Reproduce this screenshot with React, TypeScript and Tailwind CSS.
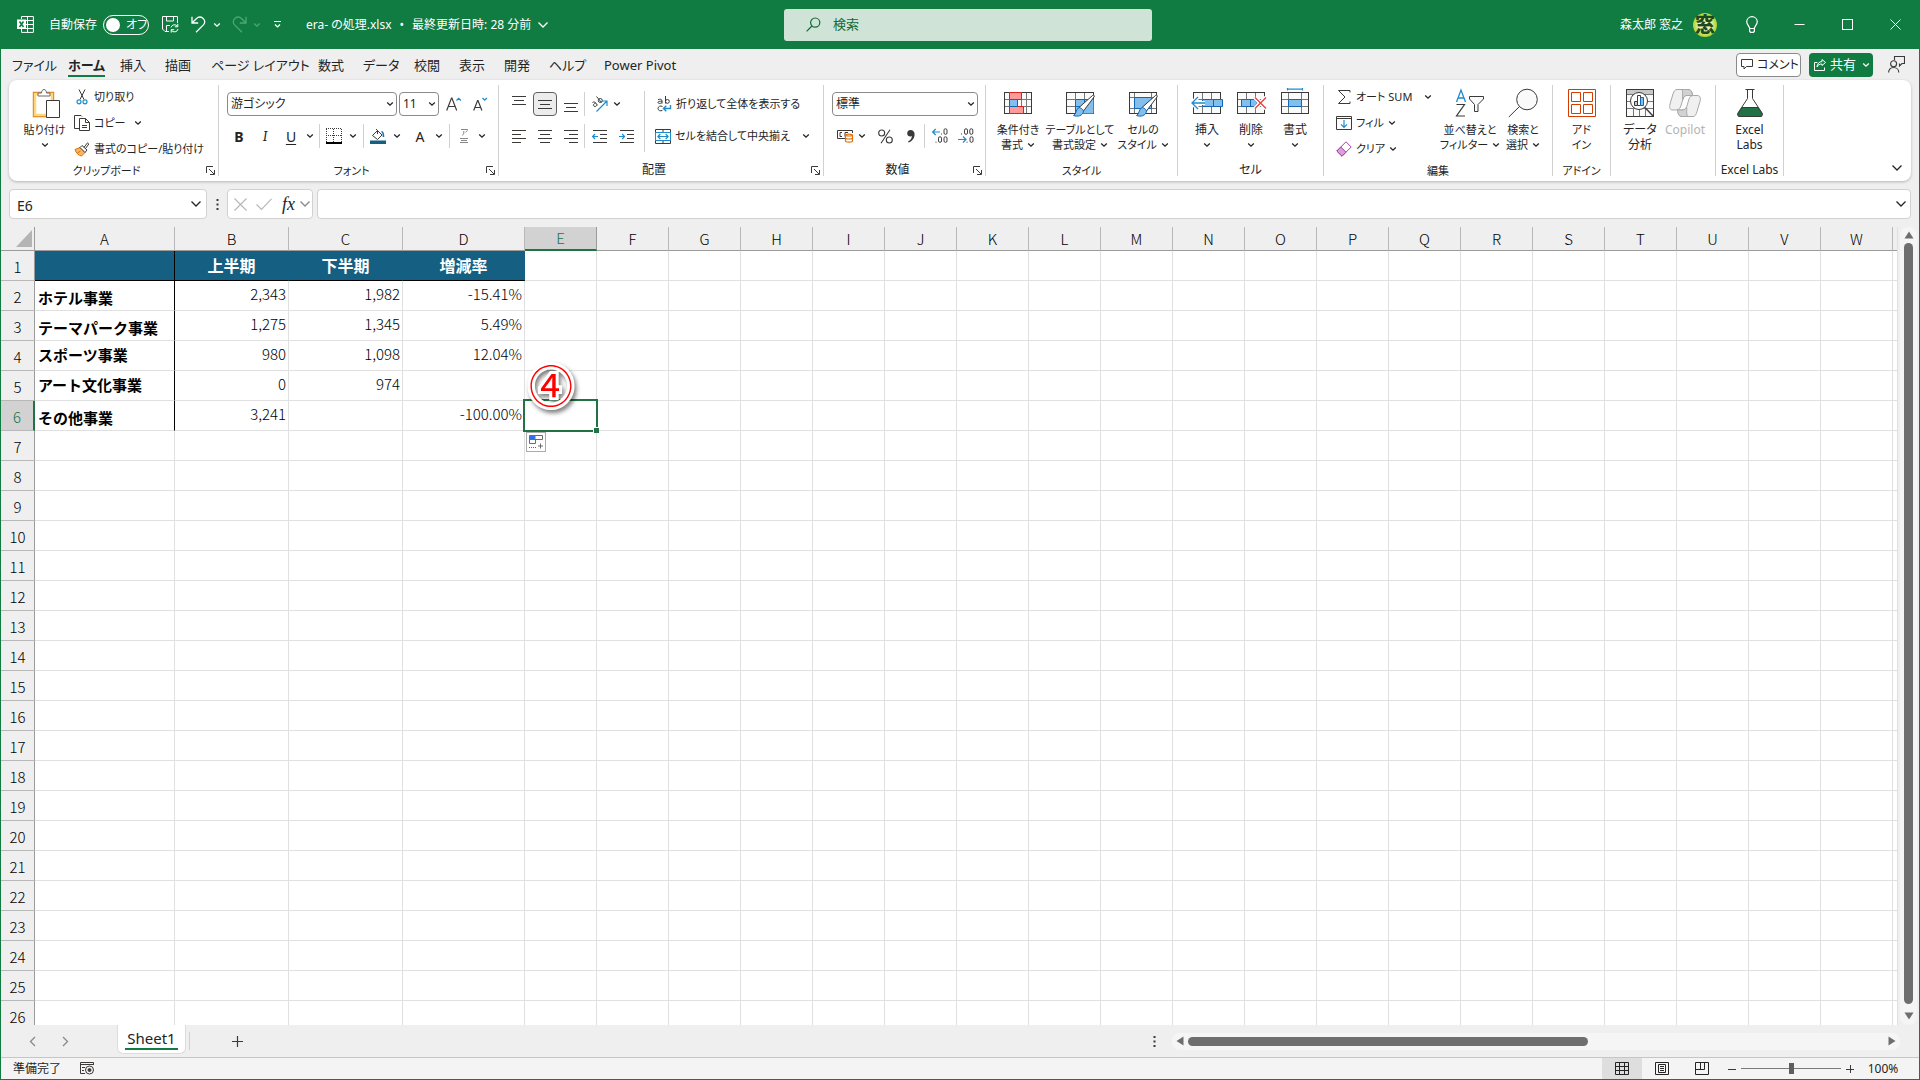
import React from "react";

const INK = "#3b3a39";
const BLUE = "#1e8bcd";

type IconProps = { className?: string };

function Chevron({ className = "" }: IconProps) {
  return (
    <svg width="8" height="6" viewBox="0 0 8 6" fill="none" stroke="currentColor" strokeWidth="1.3" className={`shrink-0 ${className}`}>
      <path d="M1.2 1.5 4 4.2 6.8 1.5" />
    </svg>
  );
}

function WideChevron({ className = "" }: IconProps) {
  return (
    <svg width="12" height="8" viewBox="0 0 12 8" fill="none" stroke="currentColor" strokeWidth="1.3" className={`shrink-0 ${className}`}>
      <path d="M1.5 1.5 6 6l4.5-4.5" />
    </svg>
  );
}

function Sep({ className = "h-6" }: IconProps) {
  return <span className={`w-px shrink-0 bg-[#d1d1d1] ${className}`} />;
}

/* ---------- title bar ---------- */

function ExcelIcon() {
  return (
    <svg width="17" height="17" viewBox="0 0 17 17" fill="none" stroke="#fff">
      <path d="M4.5 3V.5h11.9v15.9H4.5V13M10.5.5v16M8 4.5h8M8 8.5h8M8 12.5h8" />
      <rect x="0" y="3.5" width="9" height="9.5" fill="#fff" stroke="none" />
      <path d="M2.5 5.5 6.5 11M6.5 5.5 2.5 11" stroke="#107c41" strokeWidth="1.6" />
    </svg>
  );
}

function SaveIcon() {
  return (
    <svg width="17" height="17" viewBox="0 0 17 17" fill="none" stroke="#fff">
      <path d="M7 15.5H3L.5 13V.5h15V7M4.5.5V5h7V.5M4.5 15V9.5h3.5" />
      <path d="M9 11.5a3.6 3.6 0 0 1 6.6-1M15.8 7.8v3h-3M16 13a3.6 3.6 0 0 1-6.6 1.2M9.2 16.7v-3h3" />
    </svg>
  );
}

function UndoIcon() {
  return (
    <svg width="16" height="17" viewBox="0 0 16 17" fill="none" stroke="currentColor" strokeWidth="1.3">
      <path d="M1 .8V7h6.2M1.2 6.8 5.3 2.7C7 1 9.8 .6 11.9 2.2c2.3 1.7 2.4 4.8.5 6.7L5 16.3" />
    </svg>
  );
}

function Avatar() {
  return (
    <span className="flex size-6 items-center justify-center rounded-full bg-[radial-gradient(circle,#f2f2b0_35%,#a4cf1e_75%)] text-[20px] leading-6 font-black text-[#1d4a1c]">
      窓
    </span>
  );
}

function TitleBar() {
  return (
    <header className="grid h-[49px] shrink-0 grid-cols-[1fr_368px_1fr] items-center bg-[#107c41] pl-4 text-[12px] text-white">
      <div className="flex items-center">
        <ExcelIcon />
        <label htmlFor="autosave" className="ml-[15px] w-[54px] whitespace-nowrap">自動保存</label>
        <label className="relative flex h-5 w-[46px] items-center rounded-full border border-white">
          <input id="autosave" type="checkbox" role="switch" className="absolute inset-0 appearance-none rounded-full" />
          <span className="ml-[2px] size-[14px] rounded-full bg-white" />
          <span className="ml-[6px] leading-4">オフ</span>
        </label>
        <button aria-label="保存" className="ml-[13px]"><SaveIcon /></button>
        <button aria-label="元に戻す" className="ml-3 flex items-center gap-1.5"><UndoIcon /><Chevron /></button>
        <button aria-label="やり直し" className="ml-[10px] flex items-center gap-1.5 text-[#4fa577]">
          <span className="-scale-x-100"><UndoIcon /></span>
          <Chevron />
        </button>
        <button aria-label="クイック アクセス ツール バーのカスタマイズ" className="ml-3">
          <svg width="9" height="9" viewBox="0 0 9 9" fill="none" stroke="#fff" strokeWidth="1.2">
            <path d="M1 1.5h7M2 4.5l2.5 2.5L7 4.5" />
          </svg>
        </button>
        <button className="ml-6 flex items-center gap-1.5 text-[12px] whitespace-nowrap">
          <span className="flex gap-2">
            <span>era- の処理.xlsx</span>
            <span>•</span>
            <span>最終更新日時: 28 分前</span>
          </span>
          <WideChevron />
        </button>
      </div>
      <label className="flex h-8 items-center rounded-[3px] bg-[#cfe3d7] pl-[22px] text-[#0f6b38]">
        <svg width="15" height="15" viewBox="0 0 15 15" fill="none" stroke="currentColor" strokeWidth="1.2">
          <circle cx="9.2" cy="5.6" r="4.6" />
          <path d="M5.9 9 .6 14.3" />
        </svg>
        <input
          aria-label="検索"
          placeholder="検索"
          className="ml-3 min-w-0 flex-1 bg-transparent text-[13px] outline-none placeholder:text-[#0f6b38]"
        />
      </label>
      <div className="flex items-center justify-end">
        <span className="mr-2.5">森太郎 窓之</span>
        <Avatar />
        <button aria-label="ヒント" className="ml-[29px]">
          <svg width="12" height="17" viewBox="0 0 12 17" fill="none" stroke="#fff" strokeWidth="1.2">
            <path d="M3.6 12.5c0-2.5-2.9-3.6-2.9-7A5.3 5.3 0 0 1 6 .7a5.3 5.3 0 0 1 5.3 4.8c0 3.4-2.9 4.5-2.9 7zM3.6 12v3.2L4.5 16.3h3l.9-1.1V12" />
          </svg>
        </button>
        <div className="ml-[17px] flex">
          <button aria-label="最小化" className="flex h-[49px] w-12 items-center justify-center">
            <svg width="11" height="11" viewBox="0 0 11 11" stroke="#fff"><path d="M.5 5.5h10" /></svg>
          </button>
          <button aria-label="元のサイズに戻す" className="flex h-[49px] w-12 items-center justify-center">
            <svg width="11" height="11" viewBox="0 0 11 11" fill="none" stroke="#fff"><rect x=".5" y=".5" width="10" height="10" /></svg>
          </button>
          <button aria-label="閉じる" className="flex h-[49px] w-12 items-center justify-center">
            <svg width="11" height="11" viewBox="0 0 11 11" stroke="#fff"><path d="m.5.5 10 10M10.5.5l-10 10" /></svg>
          </button>
        </div>
      </div>
    </header>
  );
}

/* ---------- ribbon tabs ---------- */

const tabs = [
  { label: "ファイル", w: "w-14" },
  { label: "ホーム", w: "w-[52px]" },
  { label: "挿入", w: "w-[45px]" },
  { label: "描画", w: "w-[46px]" },
  { label: "ページ レイアウト", w: "w-[107px]" },
  { label: "数式", w: "w-[45px]" },
  { label: "データ", w: "w-[51px]" },
  { label: "校閲", w: "w-[45px]" },
  { label: "表示", w: "w-[45px]" },
  { label: "開発", w: "w-[45px]" },
  { label: "ヘルプ", w: "w-[55px]" },
  { label: "Power Pivot", w: "w-24" },
];

function RibbonTabs() {
  return (
    <nav className="flex h-[31px] shrink-0 items-center pl-[11px] text-[13px] text-[#242424]">
      {tabs.map((t) => (
        <a key={t.label} href="#" className={`${t.w} flex h-7 whitespace-nowrap`}>
          <span className={`h-[26px] leading-[28px] ${t.label === "ホーム" ? "border-b-2 border-[#107c41] font-bold" : ""}`}>{t.label}</span>
        </a>
      ))}
      <div className="ml-auto flex items-center pr-[14px]">
        <button className="flex h-6 w-[65px] items-center gap-1 rounded border border-[#8a8a8a] bg-white pl-1 text-[12px] whitespace-nowrap">
          <svg width="12" height="11" viewBox="0 0 12 11" fill="none" stroke={INK} className="shrink-0">
            <path d="M.5.5h11v7h-6L3 10V7.5H.5z" />
          </svg>
          コメント
        </button>
        <button className="ml-2 flex h-6 w-16 items-center gap-1 rounded bg-[#107c41] pl-[5px] text-[13px] text-white">
          <svg width="12" height="12" viewBox="0 0 12 12" fill="none" stroke="#fff">
            <path d="M3.5 3.5h-3v8h10v-3M8 .5l3.5 3L8 6.5V5C5.5 5 4 6 3 8c.2-3 2-5.3 5-5.5z" />
          </svg>
          共有
          <Chevron className="ml-0.5" />
        </button>
        <button aria-label="フィードバック" className="ml-[15px]">
          <svg width="17" height="17" viewBox="0 0 17 17" fill="none" stroke={INK} strokeWidth="1.1">
            <path d="M6.5 4V.5h10v7H14L11.5 10V7.5M.6 16.5c0-3 2-5 4.9-5s5.3 2 5.3 5" />
            <circle cx="5.6" cy="7.7" r="3" />
          </svg>
        </button>
      </div>
    </nav>
  );
}

/* ---------- ribbon icons ---------- */

function PasteIcon() {
  return (
    <svg width="30" height="30" viewBox="0 0 30 30" fill="none">
      <path d="M3.5 4.5h20v24h-20z" fill="#fff" stroke="#e07b12" strokeWidth="1.4" />
      <path d="M5 6h17v21H5z" stroke="#f9d87f" strokeWidth="2.5" />
      <path d="M8 8V5h3.5c0-2 1-3.5 2.5-3.5S16.5 3 16.5 5H20v3z" fill="#fff" stroke="#6b6b6b" />
      <path d="M16.5 12.5h13v17h-13z" fill="#fff" stroke={INK} />
    </svg>
  );
}

function CutIcon() {
  return (
    <svg width="16" height="16" viewBox="0 0 16 16" fill="none">
      <path d="M5 .5 10 10.5M11 .5 6 10.5" stroke={INK} />
      <circle cx="5" cy="12.8" r="2" stroke={BLUE} strokeWidth="1.2" />
      <circle cx="11" cy="12.8" r="2" stroke={BLUE} strokeWidth="1.2" />
    </svg>
  );
}

function CopyIcon() {
  return (
    <svg width="16" height="16" viewBox="0 0 16 16" fill="none" stroke={INK}>
      <path d="M5 13.5H.5V.5H7l1 1M5.5 3.5h6l4 4v8h-10zM11.5 3.5v4h4M8 10.5h5M8 12.5h5" />
    </svg>
  );
}

function BrushIcon() {
  return (
    <svg width="16" height="16" viewBox="0 0 16 16" fill="none">
      <path d="m1 8.5 5-2 5 5-3.5 3.5C4.5 14.5 2 12 1 8.5z" fill="#fbb65d" stroke="#e0700c" />
      <path d="m6 6.5 2-2 5 4.5-2 2.5zM10 6.3l3.5-4.5 1.3 1.2-3.3 4.5" fill="#fff" stroke={INK} />
      <path d="m3.5 12 3-2" stroke="#e0700c" />
    </svg>
  );
}

function LauncherIcon() {
  return (
    <svg width="9" height="9" viewBox="0 0 9 9" fill="none" stroke={INK}>
      <path d="M.5 7V.5H7M3 3l5 5M8.5 4v4.5H4" />
    </svg>
  );
}

function BordersIcon() {
  return (
    <svg width="16" height="16" viewBox="0 0 16 16" fill="none" stroke={INK}>
      <path d="M.5 1v14M15.5 1v14M0 .5h16M7.5 1v14M0 7.5h16" strokeDasharray="1 1" />
      <path d="M0 15h16" stroke="#000" strokeWidth="2" />
    </svg>
  );
}

function FillIcon() {
  return (
    <svg width="16" height="16" viewBox="0 0 16 16" fill="none">
      <path d="m2.5 7.5 5-5 4.5 4.5-4.5 4.5zM6 1l1.5 1.5V6" stroke={INK} />
      <path d="M11.5 3.5c2 .5 2 3.5 2 5.5" stroke="#1b6fb5" strokeWidth="1.6" />
      <rect y="12.5" width="16" height="3.5" fill="#156082" />
    </svg>
  );
}

const lineShapes = {
  middle: "M0 1.5h14M2 5.5h10M0 9.5h14",
  left: "M0 .5h14M0 4.5h9M0 8.5h14M0 12.5h9",
  center: "M0 .5h14M2 4.5h10M0 8.5h14M2 12.5h10",
  right: "M0 .5h14M5 4.5h9M0 8.5h14M5 12.5h9",
};

function Lines({ kind }: { kind: keyof typeof lineShapes }) {
  return (
    <svg width="14" height="13" viewBox="0 0 14 13" stroke={INK}>
      <path d={lineShapes[kind]} />
    </svg>
  );
}

function IndentIcon({ out = false }: { out?: boolean }) {
  return (
    <svg width="15" height="13" viewBox="0 0 15 13" fill="none" stroke={INK}>
      <path d="M1 .5h14M8 4.5h7M8 8.5h7M1 12.5h14" />
      <path d={out ? "M6 6.5H.7M3 4 .7 6.5 3 9" : "M0 6.5h5.5M3.2 4l2.3 2.5L3.2 9"} stroke={BLUE} strokeWidth="1.2" />
    </svg>
  );
}

function OrientIcon() {
  return (
    <svg width="17" height="17" viewBox="0 0 17 17" fill="none">
      <g stroke={INK} strokeWidth="1">
        <path d="M1.5 6.5c1.5-1 2.5-.5 3.5.8l1.5 2M4.8 7C3 7.2 1.8 9 3 10.2c1 .9 2.7 0 2.8-1.5M5.5.5l5 6" />
        <circle cx="9.3" cy="4.5" r="2" />
      </g>
      <path d="M5.5 15.5 15.5 5.5M11 5h5v5" stroke={BLUE} strokeWidth="1.2" />
    </svg>
  );
}

function WrapIcon() {
  return (
    <svg width="15" height="16" viewBox="0 0 15 16" fill="none">
      <g stroke={INK}>
        <path d="M1 3.8c1.5-1 4-.8 4 1v2.7M5 5.2c-2 0-4 .1-4 1.3s3 1.3 4-.1M8.5 0v7.5M5.5 10.5c-2-1.2-4.5 0-4.5 2s2.5 3 4.5 1.8" />
        <circle cx="10.4" cy="5.4" r="1.9" />
      </g>
      <path d="M13.5 9v3.5h-7M9.3 9.8l-2.8 2.7 2.8 2.7" stroke={BLUE} strokeWidth="1.4" />
    </svg>
  );
}

function MergeIcon() {
  return (
    <svg width="16" height="15" viewBox="0 0 16 15" fill="none">
      <path d="M.5.5h15v14H.5zM8 .5V3M8 12v2.5" stroke={INK} />
      <path d="M.5 3.5h15v8H.5z" fill="#fff" stroke={BLUE} />
      <path d="M3 7.5h10M5.3 5 2.9 7.5 5.3 10M10.7 5l2.4 2.5L10.7 10" stroke={BLUE} strokeWidth="1.2" />
    </svg>
  );
}

function CurrencyIcon() {
  return (
    <svg width="17" height="14" viewBox="0 0 17 14" fill="none">
      <path d="M8 9.5H.5v-8h15V4M5 3.5H3v4h2M8 7.5v-4h3" stroke={INK} />
      <path d="M8.5 6c0-1.3 7-1.3 7 0v6c0 1.5-7 1.5-7 0z" fill="#fff" stroke="#e0700c" strokeWidth="1.2" />
      <path d="M8.5 6c0 1.3 7 1.3 7 0M8.5 9c0 1.3 7 1.3 7 0" stroke="#e0700c" strokeWidth="1.2" />
    </svg>
  );
}

function PercentIcon() {
  return (
    <svg width="15" height="15" viewBox="0 0 15 15" fill="none" stroke={INK} strokeWidth="1.1">
      <circle cx="3.7" cy="4" r="3" />
      <circle cx="11.3" cy="11" r="3" />
      <path d="M12 .8 3 14.2" />
    </svg>
  );
}

function DecimalIcon({ less = false }: { less?: boolean }) {
  return (
    <svg width="16" height="16" viewBox="0 0 16 16" fill="none">
      <g stroke={INK}>
        {less ? (
          <>
            <rect x="6.5" y=".8" width="3" height="5.5" rx="1.4" />
            <rect x="11.8" y=".8" width="3" height="5.5" rx="1.4" />
            <path d="M3.5 5.5v1M9 13.7v1" />
          </>
        ) : (
          <>
            <rect x="12" y=".8" width="3" height="5.5" rx="1.4" />
            <rect x="6.5" y="8.8" width="3" height="5.5" rx="1.4" />
            <path d="M9.5 5.5v1M4 13.7v1" />
          </>
        )}
        <rect x="12" y="8.8" width="3" height="5.5" rx="1.4" />
      </g>
      <path d={less ? "M0 11.5h8M5 8.5l3 3-3 3" : "M8 4H.7M3.7 1l-3 3 3 3"} stroke={BLUE} strokeWidth="1.2" />
    </svg>
  );
}

function Brush() {
  return (
    <g transform="translate(3 2)">
      <path d="M12 17.5 25.5 5.5c1-1 2.5 0 1.5 1.5L16.5 21z" fill="#fff" stroke={INK} />
      <path d="M12 17.5c2 .3 4 1.8 4.5 3.5-.5 5-6 6-10 4.5 3-1 2-6.5 5.5-8z" fill="#83beec" stroke="#1267b4" />
    </g>
  );
}

function GridBox({ children }: { children?: React.ReactNode }) {
  return (
    <svg width="32" height="30" viewBox="0 0 32 30" fill="none">
      <rect x="2.5" y="4.5" width="27" height="21" fill="#fafafa" stroke={INK} />
      {children}
    </svg>
  );
}

function ConditionalIcon() {
  return (
    <GridBox>
      <path d="M7.5 5v20M19.5 5v20M24.5 5v20M3 11.5h26M3 18.5h26" stroke="#767676" />
      <path d="M7.5 4.5h12v7h-12zM7.5 18.5h14v7h-14z" fill="#ff9a9a" stroke="#e0201b" />
      <path d="M7.5 11.5h8v7h-8z" fill="#83beec" stroke="#1267b4" />
    </GridBox>
  );
}

function TableFormatIcon() {
  return (
    <GridBox>
      <path d="M11.5 5v20M20.5 5v20M3 11.5h26M3 18.5h26" stroke="#767676" />
      <path d="M11.5 11.5h18v14h-18z" fill="#83beec" />
      <path d="M11.5 11.5h14M11.5 11.5v14M20.5 11.5v8M11.5 18.5h9" stroke="#1267b4" />
      <Brush />
    </GridBox>
  );
}

function CellStyleIcon() {
  return (
    <GridBox>
      <path d="M7.5 5v20M3 9.5h26M3 20.5h26M24.5 5v20" stroke="#767676" />
      <path d="M7.5 9.5h17v11h-17z" fill="#83beec" stroke="#1267b4" />
      <Brush />
    </GridBox>
  );
}

function InsertCellsIcon() {
  return (
    <GridBox>
      <path d="M11.5 5v20M20.5 5v20M3 11.5h26M3 18.5h26" stroke="#767676" />
      <path d="M11.5 11.5h20v7h-20zM22.5 11.5v7" fill="#83beec" stroke="#1267b4" />
      <path d="M14 15H1.5M7 9l-6 6 6 6" stroke="#fff" strokeWidth="4" />
      <path d="M14 15H1.5M7 9l-6 6 6 6" stroke={BLUE} strokeWidth="1.3" />
    </GridBox>
  );
}

function DeleteCellsIcon() {
  return (
    <GridBox>
      <path d="M11.5 5v20M20.5 5v20M3 11.5h26M3 18.5h26" stroke="#767676" />
      <path d="M29 11h3v9h-3z" fill="#fff" />
      <path d="M6.5 11.5h13l3 3.5-3 3.5h-13zM15.5 11.5v7" fill="#83beec" stroke="#1267b4" />
      <path d="m20 9.5 11 11M31 9.5l-11 11" stroke="#fff" strokeWidth="4" />
      <path d="m20 9.5 11 11M31 9.5l-11 11" stroke="#e8403a" strokeWidth="1.3" />
    </GridBox>
  );
}

function FormatCellsIcon() {
  return (
    <GridBox>
      <path d="M9.5 5v20M22.5 5v20M3 11.5h26M3 18.5h26" stroke="#767676" />
      <path d="M9.5 11.5h13v7h-13z" fill="#83beec" stroke="#1267b4" />
      <path d="M8.5 0v2.5M23.5 0v2.5M8.5 1.2h15" stroke={BLUE} strokeWidth="1.2" />
    </GridBox>
  );
}

function SigmaIcon() {
  return (
    <svg width="16" height="16" viewBox="0 0 16 16" fill="none" stroke={INK}>
      <path d="M14 3.5v-2H2.5L9 8l-6.5 6.5H14v-2" />
    </svg>
  );
}

function FillDownIcon() {
  return (
    <svg width="16" height="16" viewBox="0 0 16 16" fill="none">
      <path d="M.5 1.5h15v13H.5zM.5 3.5h15" stroke={INK} />
      <path d="M8 5v7M5 9.3 8 12.3l3-3" stroke={BLUE} strokeWidth="1.2" />
    </svg>
  );
}

function EraserIcon() {
  return (
    <svg width="16" height="16" viewBox="0 0 16 16" fill="none" stroke="#a33fa8">
      <path d="M10 .8 15.2 6 6 15.2.8 10z" fill="#fff" />
      <path d="m4.8 6 5.2 5.2-4 4L.8 10z" fill="#d9a0dc" />
    </svg>
  );
}

function SortIcon() {
  return (
    <svg width="30" height="30" viewBox="0 0 30 30" fill="none">
      <path d="M1.5 14 6 2l4.5 12M3 10h6" stroke={BLUE} strokeWidth="1.3" />
      <path d="M1.5 16.5h8L1.5 28h8.5" stroke={INK} strokeWidth="1.2" />
      <path d="M14.5 8.5h14v2.5l-5.5 5.5v7h-3.5v-7L14.5 11z" fill="#fafafa" stroke={INK} />
    </svg>
  );
}

function FindIcon() {
  return (
    <svg width="30" height="30" viewBox="0 0 30 30" fill="none" stroke={INK}>
      <circle cx="19" cy="11.5" r="10.3" fill="#fafafa" />
      <path d="M11.5 18.5.8 29" />
    </svg>
  );
}

function AddInIcon() {
  return (
    <svg width="30" height="30" viewBox="0 0 30 30" fill="none" stroke="#d83b01">
      <path d="M1.5 1.5h27v27h-27z" />
      <path d="M4.5 4.5h9v9h-9zM16.5 4.5h9v9h-9zM4.5 16.5h9v9h-9zM16.5 16.5h9v9h-9z" />
    </svg>
  );
}

function AnalyzeIcon() {
  return (
    <svg width="30" height="30" viewBox="0 0 30 30" fill="none">
      <rect x="1.5" y="1.5" width="27" height="27" fill="#fafafa" />
      <path d="M2 2h26v4H2z" fill="#c8c8c8" />
      <path d="M8.5 20v8M14.5 20v8M20.5 20v8M2 13.5h26M2 20.5h26M2 6.5h26" stroke="#767676" />
      <rect x="1.5" y="1.5" width="27" height="27" stroke={INK} />
      <circle cx="14" cy="13" r="8.5" fill="#fff" stroke={INK} />
      <path d="M20 19.5 28 28" stroke={INK} strokeWidth="1.4" />
      <path d="M9.5 13.5h3v4h-3z" fill="#c8c8c8" stroke={INK} />
      <path d="M12.5 7.5h3v10h-3z" fill="#fff" stroke={INK} />
      <path d="M15.5 9.5h3v8h-3z" fill="#83beec" stroke="#1267b4" />
    </svg>
  );
}

function CopilotIcon() {
  return (
    <svg width="34" height="30" viewBox="0 0 34 30" fill="none" stroke="#a8a8a8" strokeLinejoin="round">
      <path d="M9 1.5h11c3 0 4 2 4.8 6H19c-2 0-3.2 1-4 3.5L12.5 19C11.5 21 10 22 7 22H5c-3 0-4-2-3-6l3-10C6 3 7 1.5 9 1.5z" fill="#f0f0f0" />
      <path d="M14 1.5h6c3 0 3.8 2 4.5 6H19c-2.5 0-3.5 1.5-4.2 4C14 8 15.5 4 14 1.5z" fill="#d2d2d2" />
      <path d="M25 28.5H14c-3 0-4-2.5-4.5-6.5H14c2.5 0 4-1 4.8-3.5L21 11c.8-2.5 2-3.5 5-3.5h3c3 0 4 2 3 6l-3 10c-1 3.5-2 5-4 5z" fill="#f0f0f0" />
      <path d="M20 28.5h-6c-3 0-4-2.5-4.5-6.5H14c2.5 0 4-1 4.5-3 1 3-1 6.5 1.5 9.5z" fill="#d2d2d2" />
    </svg>
  );
}

function FlaskIcon() {
  return (
    <svg width="28" height="30" viewBox="0 0 28 30" fill="none" stroke={INK}>
      <path d="M11.5 1.5v9L2 25c-1 2 0 3.5 2 3.5h20c2 0 3-1.5 2-3.5l-9.500-14.500v-9M9.500 1.500h9" />
      <path d="M6 19.5h16l4 6c.7 1.5 0 3-2 3H4c-2 0-2.7-1.5-2-3z" fill="#217346" />
    </svg>
  );
}

/* ---------- ribbon ---------- */

type GroupProps = { name: string; className: string; launcher?: boolean; children: React.ReactNode };

function Group({ name, className, launcher, children }: GroupProps) {
  return (
    <section aria-label={name || "分析"} className={`${className} flex shrink-0 flex-col border-r border-[#d1d1d1]`}>
      <div className="flex h-20 pt-[3px]">{children}</div>
      <div className={`relative flex flex-1 items-center justify-center pt-0.5 leading-none whitespace-nowrap ${launcher ? "pr-3.5" : ""}`}>
        {name}
        {launcher && (
          <button aria-label={`${name}の設定`} className="absolute right-[3px]">
            <LauncherIcon />
          </button>
        )}
      </div>
    </section>
  );
}

type BigButtonProps = { icon: React.ReactNode; lines: string[]; width: string; menu?: boolean; disabled?: boolean };

function BigButton({ icon, lines, width, menu, disabled }: BigButtonProps) {
  const single = lines.length === 1;
  return (
    <button disabled={disabled} className={`${width} flex shrink-0 flex-col items-center leading-[15px] whitespace-nowrap disabled:text-[#b3b3b3]`}>
      <span className="mb-1 block h-[30px]">{icon}</span>
      <span>{lines[0]}</span>
      <span className="flex h-[15px] items-center gap-1">
        {!single && lines[1]}
        {menu && <Chevron />}
      </span>
    </button>
  );
}

type SmallButtonProps = { icon: React.ReactNode; label: string; menu?: string };

function SmallButton({ icon, label, menu }: SmallButtonProps) {
  return (
    <button className="flex h-[26px] shrink-0 items-center gap-1 whitespace-nowrap">
      {icon}
      {label}
      {menu && <Chevron className={menu} />}
    </button>
  );
}

type ComboProps = { label: string; options: string[]; width: string };

function Combo({ label, options, width }: ComboProps) {
  return (
    <span className={`relative flex h-6 items-center ${width}`}>
      <select aria-label={label} className="h-6 w-full appearance-none rounded border border-[#8a8a8a] bg-white pl-[3px] text-[12px] leading-5">
        {options.map((o) => (
          <option key={o}>{o}</option>
        ))}
      </select>
      <Chevron className="pointer-events-none absolute right-[3px]" />
    </span>
  );
}

function ToolButton({ label, width = "w-[26px]", className = "", children }: { label: string; width?: string; className?: string; children: React.ReactNode }) {
  return (
    <button aria-label={label} className={`flex h-6 shrink-0 items-center justify-center ${width} ${className}`}>
      {children}
    </button>
  );
}

function Ribbon() {
  return (
    <div className="mx-2 flex h-[101px] shrink-0 rounded-lg bg-white py-[5px] text-[12px] text-[#242424] shadow-[0_1px_3px_rgba(0,0,0,0.25)]">
      <Group name="クリップボード" className="w-[210px] text-[11px]" launcher>
        <BigButton icon={<PasteIcon />} lines={["貼り付け"]} width="ml-[10px] w-[51px]" menu />
        <div className="-mt-1 ml-1 flex flex-col">
          <SmallButton icon={<CutIcon />} label="切り取り" />
          <SmallButton icon={<CopyIcon />} label="コピー" menu="ml-1" />
          <SmallButton icon={<BrushIcon />} label="書式のコピー/貼り付け" />
        </div>
      </Group>

      <Group name="フォント" className="w-[280px] text-[11px]" launcher>
        <div className="flex flex-col pt-1 pl-[7px]">
          <div className="flex items-center pl-px">
            <Combo label="フォント名" options={["游ゴシック", "Meiryo UI"]} width="w-[170px]" />
            <Combo label="フォント サイズ" options={["11", "12", "14"]} width="ml-0.5 w-10" />
            <ToolButton label="フォント サイズの拡大" width="ml-[7px] w-4">
              <svg width="16" height="16" viewBox="0 0 16 16" fill="none">
                <path d="M.7 14.5 5.5 2h.4l4.8 12.5M2.3 10.5h6.8" stroke={INK} strokeWidth="1.2" />
                <path d="m10.5 4.5 2.2-2.2 2.2 2.2" stroke={BLUE} strokeWidth="1.3" />
              </svg>
            </ToolButton>
            <ToolButton label="フォント サイズの縮小" width="ml-[11px] w-4">
              <svg width="16" height="16" viewBox="0 0 16 16" fill="none">
                <path d="m.7 14.5 3.9-10H5l3.9 10M2 11.5h5.6" stroke={INK} strokeWidth="1.2" />
                <path d="m9.5 2 2.2 2.2L13.9 2" stroke={BLUE} strokeWidth="1.3" />
              </svg>
            </ToolButton>
          </div>
          <div className="mt-2 flex items-center text-[14px]">
            <ToolButton label="太字" className="font-bold">B</ToolButton>
            <ToolButton label="斜体" className="font-serif italic">I</ToolButton>
            <ToolButton label="下線" className="underline underline-offset-2">U</ToolButton>
            <Chevron className="mx-0.5" />
            <Sep className="ml-[3px] h-6" />
            <ToolButton label="罫線" width="ml-1 w-5"><BordersIcon /></ToolButton>
            <Chevron className="mr-1.5 ml-[5px]" />
            <Sep />
            <ToolButton label="塗りつぶしの色" width="ml-1 w-5"><FillIcon /></ToolButton>
            <Chevron className="ml-[5px]" />
            <ToolButton label="フォントの色" width="ml-2 w-[22px]">A</ToolButton>
            <Chevron className="mr-1.5 ml-1" />
            <Sep />
            <ToolButton label="ふりがなの表示" width="ml-1 w-5">
              <svg width="10" height="16" viewBox="0 0 10 16" fill="none" stroke="#8a8886">
                <path d="M2 1.5h6.5c0 1.3-.8 2.1-2 2.8M4.8 3v2.2L3.5 7.5M1 10.5h8M2 12.5h6M1 14.5h8" />
              </svg>
            </ToolButton>
            <Chevron className="ml-1" />
          </div>
        </div>
      </Group>

      <Group name="配置" className="w-[325px]" launcher>
        <div className="flex flex-col gap-2 pt-1 pl-[7px]">
          <div className="flex items-center">
            <ToolButton label="上揃え" className="pb-1.5"><Lines kind="middle" /></ToolButton>
            <ToolButton label="上下中央揃え" width="mx-px w-6" className="rounded border border-[#5f5f5f] bg-[#ececec] pt-0.5"><Lines kind="middle" /></ToolButton>
            <ToolButton label="下揃え" className="pt-2"><Lines kind="middle" /></ToolButton>
            <Sep />
            <ToolButton label="方向" width="ml-1 w-5"><OrientIcon /></ToolButton>
            <Chevron className="ml-1" />
          </div>
          <div className="flex items-center">
            <ToolButton label="左揃え"><Lines kind="left" /></ToolButton>
            <ToolButton label="中央揃え"><Lines kind="center" /></ToolButton>
            <ToolButton label="右揃え"><Lines kind="right" /></ToolButton>
            <Sep />
            <ToolButton label="インデントを減らす" width="w-[28px]"><IndentIcon out /></ToolButton>
            <ToolButton label="インデントを増やす"><IndentIcon /></ToolButton>
          </div>
        </div>
        <Sep className="mt-[3px] ml-[5px] h-[61px]" />
        <div className="flex flex-col gap-2 pt-1 pl-2.5 text-[11px]">
          <button className="flex h-6 items-center gap-1 pl-0.5 whitespace-nowrap"><WrapIcon />折り返して全体を表示する</button>
          <button className="flex h-6 items-center gap-1 whitespace-nowrap">
            <MergeIcon />セルを結合して中央揃え<Chevron className="ml-2" />
          </button>
        </div>
      </Group>

      <Group name="数値" className="w-[162px]" launcher>
        <div className="flex flex-col gap-2 pt-1 pl-2">
          <Combo label="数値の書式" options={["標準", "数値", "通貨"]} width="w-[146px]" />
          <div className="flex items-center">
            <ToolButton label="通貨表示形式"><CurrencyIcon /></ToolButton>
            <Chevron />
            <ToolButton label="パーセント スタイル" width="ml-[11px] w-4"><PercentIcon /></ToolButton>
            <ToolButton label="桁区切りスタイル" width="ml-3 w-3">
              <svg width="8" height="13" viewBox="0 0 8 13" fill={INK}>
                <path d="M3.5 0A3.4 3.4 0 0 0 .2 3.4c0 2 1.6 3.2 3.5 3 .3 0 .9-.1 1.2-.4C4.8 8.5 3.4 10.5 1 11.6l.6.9C5.4 11.2 7.6 8 7.6 4.3 7.6 1.7 6 0 3.5 0z" />
              </svg>
            </ToolButton>
            <Sep className="ml-[7px] h-6" />
            <ToolButton label="小数点以下の表示桁数を増やす" width="ml-0.5 w-[26px]"><DecimalIcon /></ToolButton>
            <ToolButton label="小数点以下の表示桁数を減らす"><DecimalIcon less /></ToolButton>
          </div>
        </div>
      </Group>

      <Group name="スタイル" className="w-48 text-[11px]">
        <BigButton icon={<ConditionalIcon />} lines={["条件付き", "書式"]} width="ml-1 w-14" menu />
        <BigButton icon={<TableFormatIcon />} lines={["テーブルとして", "書式設定"]} width="w-[68px]" menu />
        <BigButton icon={<CellStyleIcon />} lines={["セルの", "スタイル"]} width="w-[58px]" menu />
      </Group>

      <Group name="セル" className="w-[146px]">
        <BigButton icon={<InsertCellsIcon />} lines={["挿入"]} width="ml-[7px] w-11" menu />
        <BigButton icon={<DeleteCellsIcon />} lines={["削除"]} width="w-11" menu />
        <BigButton icon={<FormatCellsIcon />} lines={["書式"]} width="w-11" menu />
      </Group>

      <Group name="編集" className="w-[229px] text-[11px]">
        <div className="-mt-1 ml-3 flex w-[106px] flex-col">
          <SmallButton icon={<SigmaIcon />} label="オート SUM" menu="ml-2" />
          <SmallButton icon={<FillDownIcon />} label="フィル" menu="ml-0" />
          <SmallButton icon={<EraserIcon />} label="クリア" menu="ml-0" />
        </div>
        <BigButton icon={<SortIcon />} lines={["並べ替えと", "フィルター"]} width="w-14" menu />
        <BigButton icon={<FindIcon />} lines={["検索と", "選択"]} width="w-[50px]" menu />
      </Group>

      <Group name="アドイン" className="w-[58px] text-[11px]">
        <BigButton icon={<AddInIcon />} lines={["アド", "イン"]} width="w-[57px]" />
      </Group>

      <Group name="" className="w-[105px]">
        <BigButton icon={<AnalyzeIcon />} lines={["データ", "分析"]} width="ml-[5px] w-12" />
        <BigButton icon={<CopilotIcon />} lines={["Copilot"]} width="w-[42px]" disabled />
      </Group>

      <Group name="Excel Labs" className="w-[68px]">
        <BigButton icon={<FlaskIcon />} lines={["Excel", "Labs"]} width="w-[67px]" />
      </Group>

      <button aria-label="リボンを折りたたむ" className="mt-auto mr-2 mb-1 ml-auto">
        <WideChevron />
      </button>
    </div>
  );
}

/* ---------- formula bar ---------- */

function Dots() {
  return (
    <svg width="3" height="11" viewBox="0 0 3 11" fill={INK} className="shrink-0">
      <path d="M.5 0h2v2h-2zM.5 4.5h2v2h-2zM.5 9h2v2h-2z" />
    </svg>
  );
}

function FormulaBar() {
  return (
    <div className="mx-2 my-2 flex h-[30px] shrink-0 items-center text-[#242424]">
      <label className="flex h-full w-[198px] items-center rounded border border-[#d1d1d1] bg-white pr-1">
        <input aria-label="名前ボックス" defaultValue="E6" className="min-w-0 flex-1 bg-transparent pt-0.5 pl-[7px] text-[14px] outline-none" />
        <WideChevron />
      </label>
      <span className="flex w-5 justify-center"><Dots /></span>
      <div className="flex h-full w-[86px] items-center rounded border border-[#d1d1d1] bg-white">
        <button aria-label="キャンセル" className="ml-1.5">
          <svg width="13" height="13" viewBox="0 0 13 13" stroke="#b8b8b8" strokeWidth="1.2"><path d="m.5.5 12 12M12.5.5l-12 12" /></svg>
        </button>
        <button aria-label="入力" className="ml-[9px]">
          <svg width="16" height="13" viewBox="0 0 16 13" fill="none" stroke="#b8b8b8" strokeWidth="1.2"><path d="m.5 6.5 5 5L15.5.8" /></svg>
        </button>
        <button aria-label="関数の挿入" className="ml-2.5 font-['Liberation_Serif',serif] text-[18px] leading-5 italic">fx</button>
        <WideChevron className="mr-px ml-auto text-[#8a8886]" />
      </div>
      <label className="ml-1 flex h-full flex-1 items-center rounded border border-[#d1d1d1] bg-white pr-[3px]">
        <input aria-label="数式バー" className="min-w-0 flex-1 bg-transparent px-2 text-[14px] outline-none" />
        <WideChevron />
      </label>
    </div>
  );
}

/* ---------- sheet ---------- */

const columns = "ABCDEFGHIJKLMNOPQRSTUVWX".split("");
const colWidths: Record<string, string> = { A: "w-[140px]", B: "w-[114px]", C: "w-[114px]", D: "w-[122px]" };
const rowCount = 26;

const cells: Record<string, string> = {
  B1: "上半期", C1: "下半期", D1: "増減率",
  A2: "ホテル事業", B2: "2,343", C2: "1,982", D2: "-15.41%",
  A3: "テーマパーク事業", B3: "1,275", C3: "1,345", D3: "5.49%",
  A4: "スポーツ事業", B4: "980", C4: "1,098", D4: "12.04%",
  A5: "アート文化事業", B5: "0", C5: "974",
  A6: "その他事業", B6: "3,241", D6: "-100.00%",
};

// rows whose label sits in the middle of the cell rather than at its foot
const centredRows = [4, 5];

function cellClass(col: string, row: number) {
  const inTable = "ABCD".includes(col);
  if (row === 1 && inTable) {
    const right = col === "A" ? "border-r-black" : "border-r-[#156082]";
    return `bg-[#156082] border-b-black ${right} pb-0.5 text-white text-[16px] font-bold text-center`;
  }
  if (col === "A" && row <= 6) {
    const pad = centredRows.includes(row) ? "pb-0.5" : "pt-1";
    return `border-b-[#e0e0e0] border-r-black ${pad} pl-[3px] text-left font-bold`;
  }
  return "border-[#e0e0e0] pr-0.5 pb-1 text-right";
}

function ActiveCell() {
  return (
    <>
      <span className="absolute -top-0.5 -right-0.5 -bottom-0.5 -left-0.5 z-10 border-2 border-[#217346]" />
      <span className="absolute -right-[3px] -bottom-[3px] z-10 size-[6px] border-t border-l border-white bg-[#217346]" />
      <button aria-label="貼り付けオプション" className="absolute top-[31px] left-px z-10 flex size-5 items-center justify-center border border-[#ababab] bg-white">
        <svg width="14" height="14" viewBox="0 0 14 14" fill="none" stroke="#6b6b6b">
          <path d="M.5.5h13v4H.5zM.5 4.5h6v4h-6z" />
          <path d="M1 1h5.5v3H1z" fill="#2f6fed" stroke="none" />
          <path d="M0 12.5h8" strokeDasharray="1 1" />
          <path d="M9 11h5M11.5 8.5v5" />
        </svg>
      </button>
      <span className="absolute -top-[42px] left-1 z-20 text-[44px] leading-[50px] font-normal text-[#f00] drop-shadow-[2px_3px_2px_rgba(0,0,0,0.5)] [-webkit-text-stroke:6px_white] [paint-order:stroke_fill]">
        ④
      </span>
    </>
  );
}

function Sheet() {
  return (
    <div className="min-w-0 flex-1 overflow-hidden border-r border-[#e0e0e0] bg-white">
      <table className="w-max table-fixed border-separate border-spacing-0 font-['Noto_Sans_CJK_JP',sans-serif] text-[15px] leading-5 font-light text-black [font-feature-settings:normal]">
        <thead>
          <tr className="h-6 bg-[#efefef]">
            <th aria-label="すべて選択" className="w-[34px] border-r border-b border-[#9b9b9b] p-0 align-bottom">
              <svg width="17" height="17" viewBox="0 0 17 17" className="mb-[3px] ml-[14px]"><path d="M17 0v17H1z" fill="#b4b4b4" /></svg>
            </th>
            {columns.map((c) => (
              <th
                key={c}
                scope="col"
                className={`${colWidths[c] ?? "w-[72px]"} border-r p-0 font-light ${
                  c === "E" ? "border-b-2 border-r-[#9b9b9b] border-b-[#217346] bg-[#d2d2d2] text-[#217346]" : "border-b border-r-[#b8b8b8] border-b-[#9b9b9b]"
                }`}
              >
                {c}
              </th>
            ))}
          </tr>
        </thead>
        <tbody>
          {Array.from({ length: rowCount }, (_, i) => i + 1).map((row) => (
            <tr key={row} className="h-[30px]">
              <th
                scope="row"
                className={`border-b border-b-[#b8b8b8] p-0 pt-[3px] font-light ${
                  row === 6 ? "border-r-2 border-r-[#217346] bg-[#d2d2d2] text-[#217346]" : "border-r border-r-[#9b9b9b] bg-[#efefef]"
                }`}
              >
                {row}
              </th>
              {columns.map((c) => (
                <td key={c} className={`border-r border-b p-0 ${cellClass(c, row)} ${c === "E" && row === 6 ? "relative" : ""}`}>
                  {cells[c + row]}
                  {c === "E" && row === 6 && <ActiveCell />}
                </td>
              ))}
            </tr>
          ))}
        </tbody>
      </table>
    </div>
  );
}

function VerticalScroll() {
  return (
    <div className="flex w-[21px] shrink-0 justify-center">
      <div className="flex w-[17px] flex-col items-center rounded-lg bg-[#f5f5f5] pt-1 pb-[5px]">
        <svg width="10" height="8" viewBox="0 0 10 8" className="shrink-0"><path d="M5 .5 9.5 7.5h-9z" fill="#6e6e6e" /></svg>
        <span className="mt-1 w-[9px] flex-1 rounded-full bg-[#6e6e6e]" />
        <svg width="10" height="8" viewBox="0 0 10 8" className="mt-2 shrink-0"><path d="M5 7.5.5.5h9z" fill="#6e6e6e" /></svg>
      </div>
    </div>
  );
}

/* ---------- bottom bars ---------- */

function SheetTabs() {
  return (
    <div className="flex h-[33px] shrink-0 items-center border-b border-[#c6c6c6] text-[15px] text-[#242424]">
      <button aria-label="前のシート" className="ml-7">
        <svg width="7" height="11" viewBox="0 0 7 11" fill="none" stroke="#8a8886" strokeWidth="1.3"><path d="M6 1 1.5 5.5 6 10" /></svg>
      </button>
      <button aria-label="次のシート" className="ml-[26px]">
        <svg width="7" height="11" viewBox="0 0 7 11" fill="none" stroke="#8a8886" strokeWidth="1.3"><path d="m1 1 4.5 4.5L1 10" /></svg>
      </button>
      <a href="#" className="ml-12 flex h-[29px] w-[69px] justify-center self-start rounded-b-md border-x border-b border-[#dcdcdc] bg-white">
        <span className="h-[25px] border-b-2 border-[#107c41] px-0.5 leading-[26px]">Sheet1</span>
      </a>
      <Sep className="ml-[3px] h-[18px]" />
      <button aria-label="新しいシート" className="ml-[42px]">
        <svg width="11" height="11" viewBox="0 0 11 11" stroke={INK} strokeWidth="1.2"><path d="M0 5.5h11M5.5 0v11" /></svg>
      </button>
      <div className="ml-auto flex w-[766px] items-center pr-[19px]">
        <Dots />
        <div className="ml-4 flex h-[17px] flex-1 items-center rounded-lg bg-[#f5f5f5] px-1">
          <svg width="8" height="10" viewBox="0 0 8 10"><path d="M7.5.5v9L.5 5z" fill="#6e6e6e" /></svg>
          <span className="ml-1 h-[9px] w-[400px] rounded-full bg-[#6e6e6e]" />
          <svg width="8" height="10" viewBox="0 0 8 10" className="ml-auto"><path d="M.5.5v9l7-4.5z" fill="#6e6e6e" /></svg>
        </div>
      </div>
    </div>
  );
}

function StatusBar() {
  return (
    <footer className="flex h-[21px] shrink-0 items-center bg-[#f4f4f4] pl-3 text-[12px] leading-4 text-[#242424]">
      <span>準備完了</span>
      <button aria-label="マクロの記録" className="ml-[19px]">
        <svg width="15" height="13" viewBox="0 0 15 13" fill="none" stroke={INK}>
          <path d="M5 11.5H.5V.5h13V3M.5 2.5h13M2 5.5h3M2 8.5h2" />
          <circle cx="9.5" cy="8" r="4" />
          <circle cx="9.5" cy="8" r="1.5" fill={INK} />
        </svg>
      </button>
      <div className="ml-auto flex items-center">
        <button aria-label="標準" className="flex h-[21px] w-10 items-center justify-center bg-[#dedede]">
          <svg width="14" height="13" viewBox="0 0 14 13" fill="none" stroke="#242424"><path d="M.5.5h13v12H.5zM4.5.5v12M9.5.5v12M.5 4.5h13M.5 8.5h13" /></svg>
        </button>
        <button aria-label="ページ レイアウト" className="flex h-[21px] w-10 items-center justify-center">
          <svg width="14" height="13" viewBox="0 0 14 13" fill="none" stroke="#242424"><path d="M.5.5h13v12H.5zM3.5 2.5h7v8h-7zM5 4.5h4M5 6.5h4M5 8.5h4" /></svg>
        </button>
        <button aria-label="改ページ プレビュー" className="flex h-[21px] w-10 items-center justify-center">
          <svg width="14" height="13" viewBox="0 0 14 13" fill="none" stroke="#242424"><path d="M.5.5h13v12H.5zM5.5.5v7M9.5.5v7M.5 7.5h9" /></svg>
        </button>
        <button aria-label="縮小" className="ml-1.5">
          <svg width="8" height="8" viewBox="0 0 8 8" stroke={INK}><path d="M0 4.5h8" /></svg>
        </button>
        <input
          type="range"
          aria-label="ズーム"
          min={0}
          max={100}
          defaultValue={50}
          className="mx-[5px] h-3 w-[100px] appearance-none bg-[linear-gradient(#7a7a7a,#7a7a7a)] bg-[length:100%_1px] bg-center bg-no-repeat [&::-webkit-slider-thumb]:h-[11px] [&::-webkit-slider-thumb]:w-[5px] [&::-webkit-slider-thumb]:appearance-none [&::-webkit-slider-thumb]:bg-[#605e5c]"
        />
        <button aria-label="拡大">
          <svg width="8" height="8" viewBox="0 0 8 8" stroke={INK}><path d="M0 4.5h8M4.5 0v8" /></svg>
        </button>
        <button className="w-[65px] pr-[7px] text-center">100%</button>
      </div>
    </footer>
  );
}

export default function App() {
  return (
    <div className="flex h-screen flex-col overflow-hidden border border-t-0 border-[#107c41] bg-[#efefef] font-['Noto_Sans','Noto_Sans_CJK_JP',sans-serif] [font-feature-settings:'palt']">
      <TitleBar />
      <RibbonTabs />
      <Ribbon />
      <FormulaBar />
      <main className="flex min-h-0 flex-1">
        <Sheet />
        <VerticalScroll />
      </main>
      <SheetTabs />
      <StatusBar />
    </div>
  );
}
